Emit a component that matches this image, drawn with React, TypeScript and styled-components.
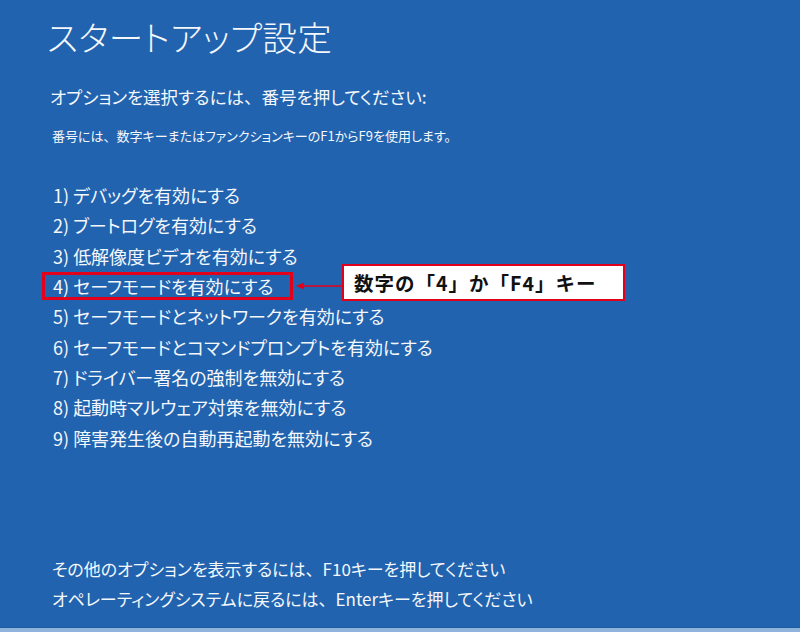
import React from "react";
import styled, { createGlobalStyle } from "styled-components";

const GlobalStyle = createGlobalStyle`
  html, body {
    margin: 0;
    padding: 0;
    overflow: hidden;
  }
  body {
    font-family: "Noto Sans CJK JP", "Noto Sans", sans-serif;
  }
`;

const options = [
  "デバッグを有効にする",
  "ブートログを有効にする",
  "低解像度ビデオを有効にする",
  "セーフモードを有効にする",
  "セーフモードとネットワークを有効にする",
  "セーフモードとコマンドプロンプトを有効にする",
  "ドライバー署名の強制を無効にする",
  "起動時マルウェア対策を無効にする",
  "障害発生後の自動再起動を無効にする",
];

const App: React.FC = () => {
  return (
    <>
      <GlobalStyle />
      <Screen>
        <Title>スタートアップ設定</Title>
        <Prompt>
          オプションを選択するには<Punct>、</Punct>番号を押してください:
        </Prompt>
        <Note>
          番号には<Punct>、</Punct>数字キーまたはファンクションキーのF1からF9を使用します。
        </Note>
        <List>
          {options.map((text, i) =>
            i === 3 ? (
              <Row key={i}>
                <Highlight>
                  {i + 1}) {text}
                </Highlight>
                <Arrow width="48" height="10" viewBox="0 0 48 10">
                  <line x1="6" y1="5" x2="48" y2="5" stroke="#e2001a" strokeWidth="1.6" />
                  <polygon points="0,5 8,1.5 8,8.5" fill="#e2001a" />
                </Arrow>
                <Callout>数字の「4」か「F4」キー</Callout>
              </Row>
            ) : (
              <Row key={i}>
                <Item>
                  {i + 1}) {text}
                </Item>
              </Row>
            )
          )}
        </List>
        <Footer>
          <FooterLine>
            その他のオプションを表示するには<Punct>、</Punct>F10キーを押してください
          </FooterLine>
          <FooterLine>
            オペレーティングシステムに戻るには<Punct>、</Punct>Enterキーを押してください
          </FooterLine>
        </Footer>
        <BottomEdge />
      </Screen>
    </>
  );
};

export default App;

const Screen = styled.div`
  width: 800px;
  height: 632px;
  background: #2163ae;
  color: #f4f7fb;
  display: flex;
  flex-direction: column;
  box-sizing: border-box;
  padding-top: 14px;
  font-feature-settings: "palt";
`;

const Punct = styled.span`
  font-feature-settings: normal;
`;

const Title = styled.h1`
  margin: 0 0 0 47px;
  font-size: 34.6px;
  line-height: 44px;
  font-weight: 300;
  letter-spacing: 0.3px;
`;

const Prompt = styled.p`
  margin: 27px 0 0 50px;
  font-size: 17.5px;
  line-height: 24px;
`;

const Note = styled.p`
  margin: 18px 0 0 52px;
  font-size: 13px;
  line-height: 18px;
`;

const List = styled.div`
  margin: 35px 0 0 42px;
  display: flex;
  flex-direction: column;
`;

const Row = styled.div`
  height: 30.3px;
  display: flex;
  align-items: center;
`;

const Item = styled.div`
  padding-left: 11px;
  font-size: 18px;
  line-height: 24px;
  white-space: nowrap;
`;

const Highlight = styled(Item)`
  width: 251px;
  height: 28px;
  box-sizing: border-box;
  padding-left: 8px;
  border: 3px solid #e2001a;
  display: flex;
  align-items: center;
`;

const Arrow = styled.svg`
  margin-left: 3px;
  flex: none;
`;

const Callout = styled.div`
  align-self: flex-end;
  margin-left: -2px;
  width: 283px;
  height: 37px;
  box-sizing: border-box;
  background: #ffffff;
  border: 2px solid #e2001a;
  color: #111111;
  font-feature-settings: normal;
  font-weight: 700;
  font-size: 19.5px;
  letter-spacing: 1px;
  display: flex;
  align-items: center;
  padding-left: 10px;
  white-space: nowrap;
`;

const Footer = styled.div`
  margin: auto 0 0 52px;
  padding-bottom: 13px;
`;

const FooterLine = styled.div`
  font-size: 17px;
  line-height: 30px;
  white-space: nowrap;
`;

const BottomEdge = styled.div`
  height: 4px;
  flex: none;
  background: #8fb3dc;
  border-top: 1px solid #1d5aa0;
`;
